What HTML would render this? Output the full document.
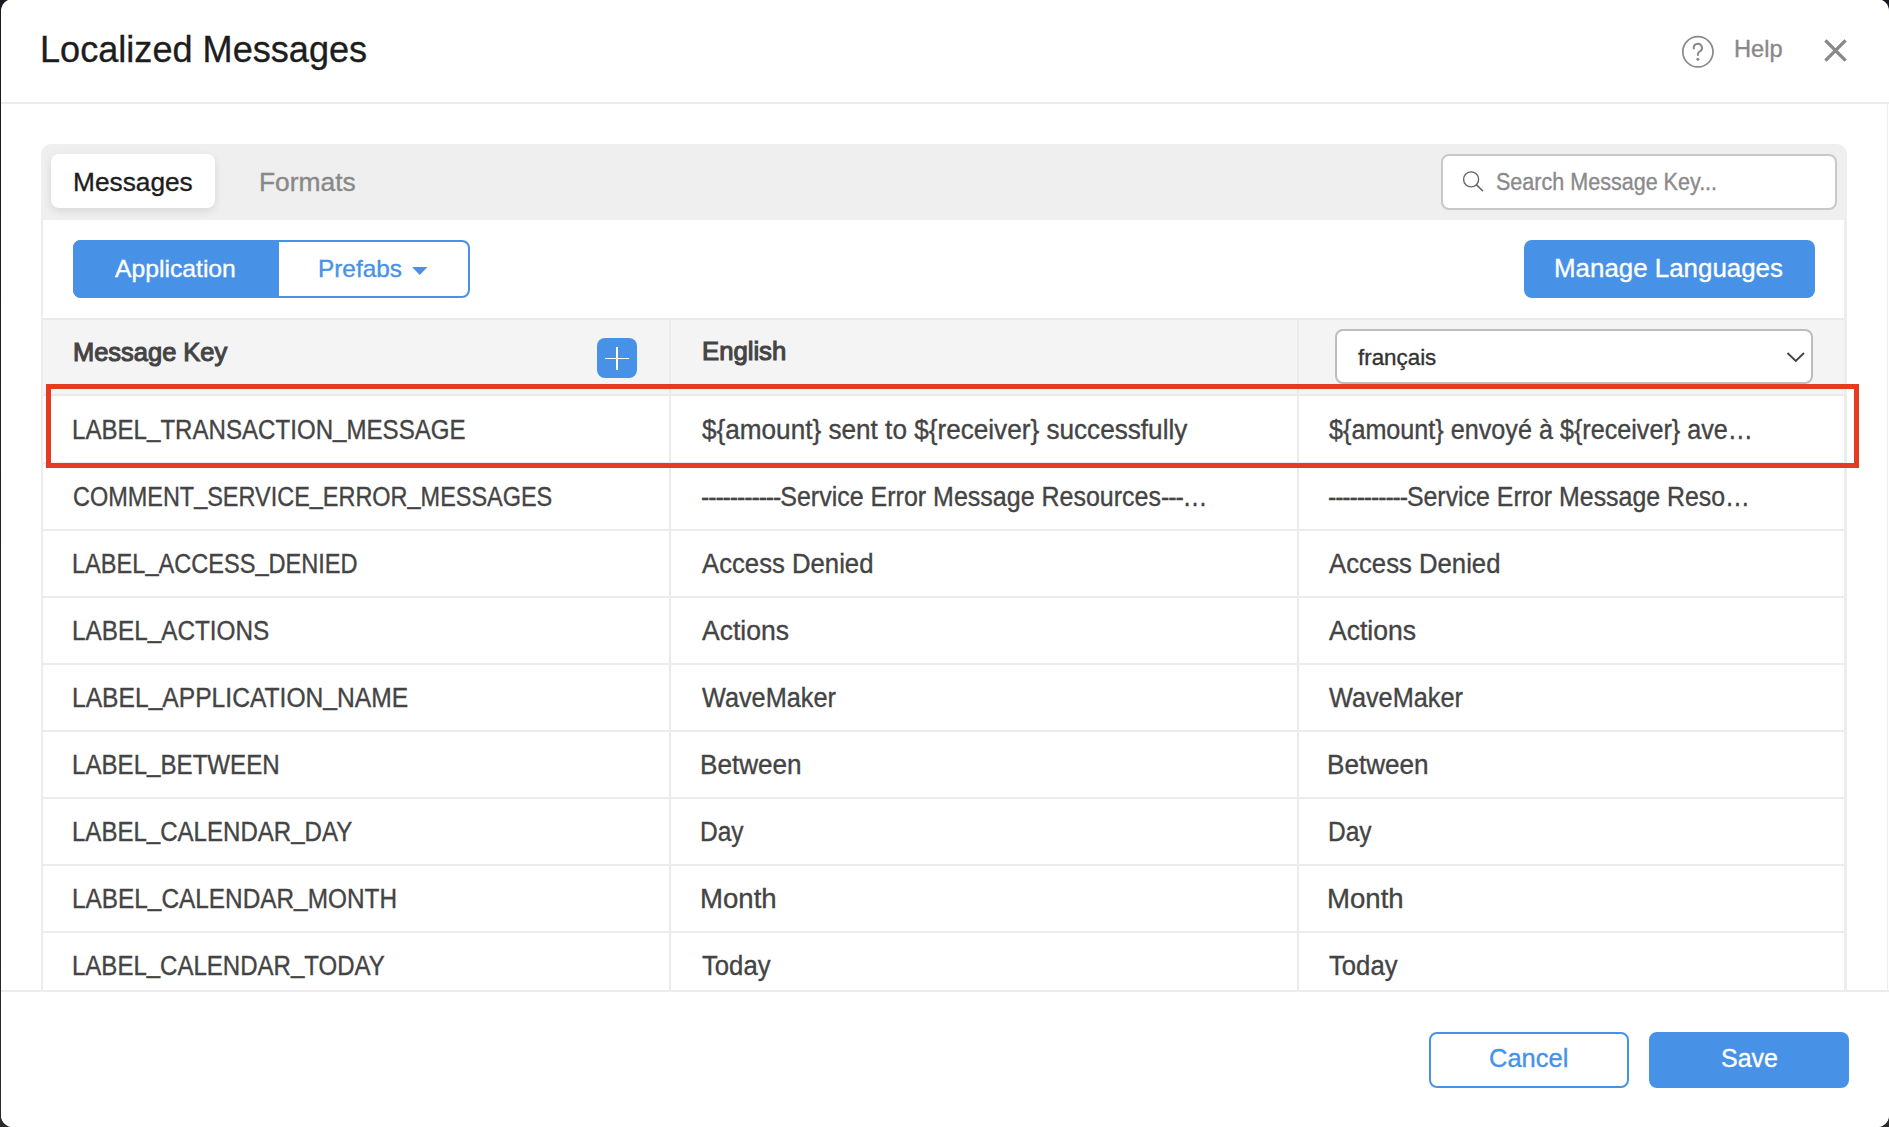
<!DOCTYPE html>
<html>
<head>
<meta charset="utf-8">
<style>
html,body{margin:0;padding:0;}
body{width:1889px;height:1127px;overflow:hidden;background:linear-gradient(to bottom,#161b22,#2a2a2a);position:relative;font-family:"Liberation Sans",sans-serif;}
.abs{position:absolute;}
#modal{position:absolute;left:1px;top:-1px;width:1888px;height:1128.4px;background:#fff;border-radius:12px;overflow:hidden;}
#inner{position:absolute;left:0;top:1px;width:1890px;height:1127px;}
.t{position:absolute;white-space:nowrap;line-height:1;transform-origin:0 0;-webkit-text-stroke:0.35px currentColor;}
.btn{position:absolute;box-sizing:border-box;border-radius:8px;}
.blue{background:#4792e7;}
.vdiv{position:absolute;width:2px;background:#ebebeb;}
.row{position:absolute;left:42px;width:1801px;height:67px;border-bottom:2px solid #ececec;box-sizing:border-box;}
</style>
</head>
<body>
<div id="modal"><div id="inner">
  <!-- header -->
  <svg class="abs" style="left:1679px;top:34px" width="36" height="36" viewBox="0 0 36 36">
    <circle cx="17.9" cy="17.8" r="15.1" fill="none" stroke="#888" stroke-width="1.7"/>
    <path d="M13.8 14.6 A4.1 4.1 0 1 1 19.95 17.35 Q17.9 18.3 17.9 20.2 V21.1" fill="none" stroke="#888" stroke-width="2" stroke-linecap="round"/>
    <circle cx="17.9" cy="25.3" r="1.5" fill="#888"/>
  </svg>
  <svg class="abs" style="left:1821px;top:37px" width="27" height="27" viewBox="0 0 27 27">
    <path d="M3.4 3.4 L23.6 23.6 M23.6 3.4 L3.4 23.6" stroke="#888" stroke-width="3.4"/>
  </svg>
  <div class="abs" style="left:0;top:102px;width:1890px;height:2px;background:#ececec;"></div>
  <div class="abs" style="left:1886px;top:104px;width:1px;height:886px;background:#eeeeee;"></div>

  <!-- tabs -->
  <div class="abs" style="left:40px;top:144px;width:1806px;height:76px;background:#efefef;border-radius:10px 10px 0 0;"></div>
  <div class="abs" style="left:50px;top:154px;width:164px;height:54px;background:#fff;border-radius:8px;box-shadow:0 3px 8px rgba(0,0,0,0.10);"></div>
  <div class="abs" style="left:1440px;top:154px;width:392px;height:52px;background:#fff;border:2px solid #c8c8c8;border-radius:8px;"></div>
  <svg class="abs" style="left:1459px;top:166px" width="30" height="30" viewBox="0 0 30 30">
    <circle cx="11.1" cy="13.4" r="7.5" fill="none" stroke="#666" stroke-width="1.4"/>
    <path d="M16.6 18.9 L22.5 24.7" stroke="#666" stroke-width="1.6" stroke-linecap="round"/>
  </svg>

  <!-- panel -->
  <div class="abs" style="left:40px;top:220px;width:1801px;height:800px;background:#fff;border-left:2px solid #ededed;border-right:3px solid #ededed;"></div>

  <!-- buttons -->
  <div class="btn" style="left:72px;top:240px;width:397px;height:58px;border:2px solid #4792e7;background:#fff;"></div>
  <div class="btn blue" style="left:72px;top:240px;width:206px;height:58px;border-radius:8px 0 0 8px;"></div>
  <svg class="abs" style="left:411px;top:267px" width="16" height="10" viewBox="0 0 16 10"><path d="M0 0 L15.5 0 L7.75 8 Z" fill="#4792e7"/></svg>
  <div class="btn blue" style="left:1523px;top:240px;width:291px;height:58px;"></div>

  <!-- table header -->
  <div class="abs" style="left:42px;top:318px;width:1801px;height:78px;background:#f4f4f4;border-top:2px solid #eaeaea;border-bottom:2px solid #eaeaea;box-sizing:border-box;"></div>
  <div class="btn blue" style="left:596px;top:338px;width:40px;height:40px;"></div>
  <div class="abs" style="left:604.4px;top:357.5px;width:23.2px;height:1.6px;background:#fff;"></div>
  <div class="abs" style="left:615.1px;top:346.9px;width:1.6px;height:23px;background:#fff;"></div>
  <div class="btn" style="left:1334px;top:329px;width:478px;height:55px;border:2px solid #bdbdbd;background:#fff;"></div>
  <svg class="abs" style="left:1785px;top:351px" width="20" height="12" viewBox="0 0 20 12"><path d="M1.5 2 L9.75 10 L18 2" fill="none" stroke="#424242" stroke-width="1.8"/></svg>

  <!-- rows -->
  <div class="row" style="top:397px"></div>
  <div class="row" style="top:464px"></div>
  <div class="row" style="top:531px"></div>
  <div class="row" style="top:598px"></div>
  <div class="row" style="top:665px"></div>
  <div class="row" style="top:732px"></div>
  <div class="row" style="top:799px"></div>
  <div class="row" style="top:866px"></div>
  <div class="row" style="top:933px"></div>
  <div class="vdiv" style="left:668px;top:320px;height:670px;"></div>
  <div class="vdiv" style="left:1296px;top:320px;height:670px;"></div>

  <div class="t" style="left:39.37px;top:30.88px;font-size:37px;font-weight:400;color:#1d1d1d;transform:scaleX(0.9758);">Localized Messages</div>
  <div class="t" style="left:1732.97px;top:36.96px;font-size:24.5px;font-weight:400;color:#888;transform:scaleX(0.9646);">Help</div>
  <div class="t" style="left:71.52px;top:168.77px;font-size:26.5px;font-weight:400;color:#1d1d1d;transform:scaleX(0.9915);">Messages</div>
  <div class="t" style="left:258.11px;top:168.57px;font-size:26.5px;font-weight:400;color:#888;transform:scaleX(0.9958);">Formats</div>
  <div class="t" style="left:1495.36px;top:170.63px;font-size:23px;font-weight:400;color:#8a8a8a;transform:scaleX(0.9365);">Search Message Key...</div>
  <div class="t" style="left:114.10px;top:257.28px;font-size:24px;font-weight:400;color:#fff;transform:scaleX(1.0293);">Application</div>
  <div class="t" style="left:317.07px;top:257.28px;font-size:24px;font-weight:400;color:#4792e7;transform:scaleX(1.0150);">Prefabs</div>
  <div class="t" style="left:1553.31px;top:254.99px;font-size:26px;font-weight:400;color:#fff;transform:scaleX(0.9960);">Manage Languages</div>
  <div class="t" style="left:72.34px;top:338.87px;font-size:26.5px;font-weight:500;color:#444;transform:scaleX(0.9606);-webkit-text-stroke:1.1px currentColor;">Message Key</div>
  <div class="t" style="left:700.53px;top:338.47px;font-size:26.5px;font-weight:500;color:#444;transform:scaleX(0.9694);-webkit-text-stroke:1.1px currentColor;">English</div>
  <div class="t" style="left:1356.70px;top:346.81px;font-size:22.2px;font-weight:400;color:#333;transform:scaleX(1.0078);">français</div>
  <div class="t" style="left:70.80px;top:416.91px;font-size:26.8px;font-weight:400;color:#444;transform:scaleX(0.8989);">LABEL<span style="position:relative;top:-2.5px">_</span>TRANSACTION<span style="position:relative;top:-2.5px">_</span>MESSAGE</div>
  <div class="t" style="left:700.80px;top:416.91px;font-size:26.8px;font-weight:400;color:#444;transform:scaleX(0.9755);">${amount} sent to ${receiver} successfully</div>
  <div class="t" style="left:1328.40px;top:416.91px;font-size:26.8px;font-weight:400;color:#444;transform:scaleX(0.9393);">${amount} envoyé à ${receiver} ave…</div>
  <div class="t" style="left:71.72px;top:483.91px;font-size:26.8px;font-weight:400;color:#444;transform:scaleX(0.8753);">COMMENT<span style="position:relative;top:-2.5px">_</span>SERVICE<span style="position:relative;top:-2.5px">_</span>ERROR<span style="position:relative;top:-2.5px">_</span>MESSAGES</div>
  <div class="t" style="left:699.87px;top:483.91px;font-size:26.8px;font-weight:400;color:#444;transform:scaleX(0.9330);"><span style='letter-spacing:-1.2px'>-----------</span>Service Error Message Resources<span style='letter-spacing:-1.2px'>---</span>…</div>
  <div class="t" style="left:1327.47px;top:483.91px;font-size:26.8px;font-weight:400;color:#444;transform:scaleX(0.9289);"><span style='letter-spacing:-1.2px'>-----------</span>Service Error Message Reso…</div>
  <div class="t" style="left:70.84px;top:550.91px;font-size:26.8px;font-weight:400;color:#444;transform:scaleX(0.8795);">LABEL<span style="position:relative;top:-2.5px">_</span>ACCESS<span style="position:relative;top:-2.5px">_</span>DENIED</div>
  <div class="t" style="left:700.80px;top:550.91px;font-size:26.8px;font-weight:400;color:#444;transform:scaleX(0.9593);">Access Denied</div>
  <div class="t" style="left:1328.40px;top:550.91px;font-size:26.8px;font-weight:400;color:#444;transform:scaleX(0.9593);">Access Denied</div>
  <div class="t" style="left:70.79px;top:617.91px;font-size:26.8px;font-weight:400;color:#444;transform:scaleX(0.9070);">LABEL<span style="position:relative;top:-2.5px">_</span>ACTIONS</div>
  <div class="t" style="left:700.80px;top:617.91px;font-size:26.8px;font-weight:400;color:#444;transform:scaleX(0.9908);">Actions</div>
  <div class="t" style="left:1328.40px;top:617.91px;font-size:26.8px;font-weight:400;color:#444;transform:scaleX(0.9908);">Actions</div>
  <div class="t" style="left:70.76px;top:684.91px;font-size:26.8px;font-weight:400;color:#444;transform:scaleX(0.9187);">LABEL<span style="position:relative;top:-2.5px">_</span>APPLICATION<span style="position:relative;top:-2.5px">_</span>NAME</div>
  <div class="t" style="left:700.80px;top:684.91px;font-size:26.8px;font-weight:400;color:#444;transform:scaleX(0.9430);">WaveMaker</div>
  <div class="t" style="left:1328.40px;top:684.91px;font-size:26.8px;font-weight:400;color:#444;transform:scaleX(0.9430);">WaveMaker</div>
  <div class="t" style="left:70.80px;top:751.91px;font-size:26.8px;font-weight:400;color:#444;transform:scaleX(0.8996);">LABEL<span style="position:relative;top:-2.5px">_</span>BETWEEN</div>
  <div class="t" style="left:698.85px;top:751.91px;font-size:26.8px;font-weight:400;color:#444;transform:scaleX(0.9743);">Between</div>
  <div class="t" style="left:1326.45px;top:751.91px;font-size:26.8px;font-weight:400;color:#444;transform:scaleX(0.9743);">Between</div>
  <div class="t" style="left:70.81px;top:818.91px;font-size:26.8px;font-weight:400;color:#444;transform:scaleX(0.8971);">LABEL<span style="position:relative;top:-2.5px">_</span>CALENDAR<span style="position:relative;top:-2.5px">_</span>DAY</div>
  <div class="t" style="left:698.97px;top:818.91px;font-size:26.8px;font-weight:400;color:#444;transform:scaleX(0.9152);">Day</div>
  <div class="t" style="left:1326.57px;top:818.91px;font-size:26.8px;font-weight:400;color:#444;transform:scaleX(0.9152);">Day</div>
  <div class="t" style="left:70.78px;top:885.91px;font-size:26.8px;font-weight:400;color:#444;transform:scaleX(0.9093);">LABEL<span style="position:relative;top:-2.5px">_</span>CALENDAR<span style="position:relative;top:-2.5px">_</span>MONTH</div>
  <div class="t" style="left:698.74px;top:885.91px;font-size:26.8px;font-weight:400;color:#444;transform:scaleX(1.0296);">Month</div>
  <div class="t" style="left:1326.34px;top:885.91px;font-size:26.8px;font-weight:400;color:#444;transform:scaleX(1.0296);">Month</div>
  <div class="t" style="left:70.81px;top:952.91px;font-size:26.8px;font-weight:400;color:#444;transform:scaleX(0.8960);">LABEL<span style="position:relative;top:-2.5px">_</span>CALENDAR<span style="position:relative;top:-2.5px">_</span>TODAY</div>
  <div class="t" style="left:700.80px;top:952.91px;font-size:26.8px;font-weight:400;color:#444;transform:scaleX(0.9583);">Today</div>
  <div class="t" style="left:1328.40px;top:952.91px;font-size:26.8px;font-weight:400;color:#444;transform:scaleX(0.9583);">Today</div>

  <div class="abs" style="left:45px;top:384px;width:1813px;height:84px;border:5px solid #e63b22;box-sizing:border-box;"></div>

  <!-- footer -->
  <div class="abs" style="left:0;top:990px;width:1890px;height:140px;background:#fff;"></div>
  <div class="abs" style="left:0;top:990px;width:1890px;height:2px;background:#ececec;"></div>
  <div class="btn" style="left:1428px;top:1032px;width:200px;height:56px;border:2px solid #4792e7;background:#fff;"></div>
  <div class="btn blue" style="left:1648px;top:1032px;width:200px;height:56px;"></div>
  <div class="t" style="left:1488.42px;top:1045.19px;font-size:26px;font-weight:400;color:#4792e7;transform:scaleX(0.9797);">Cancel</div>
  <div class="t" style="left:1719.74px;top:1045.19px;font-size:26px;font-weight:400;color:#fff;transform:scaleX(0.9614);">Save</div>
</div></div>
</body>
</html>
